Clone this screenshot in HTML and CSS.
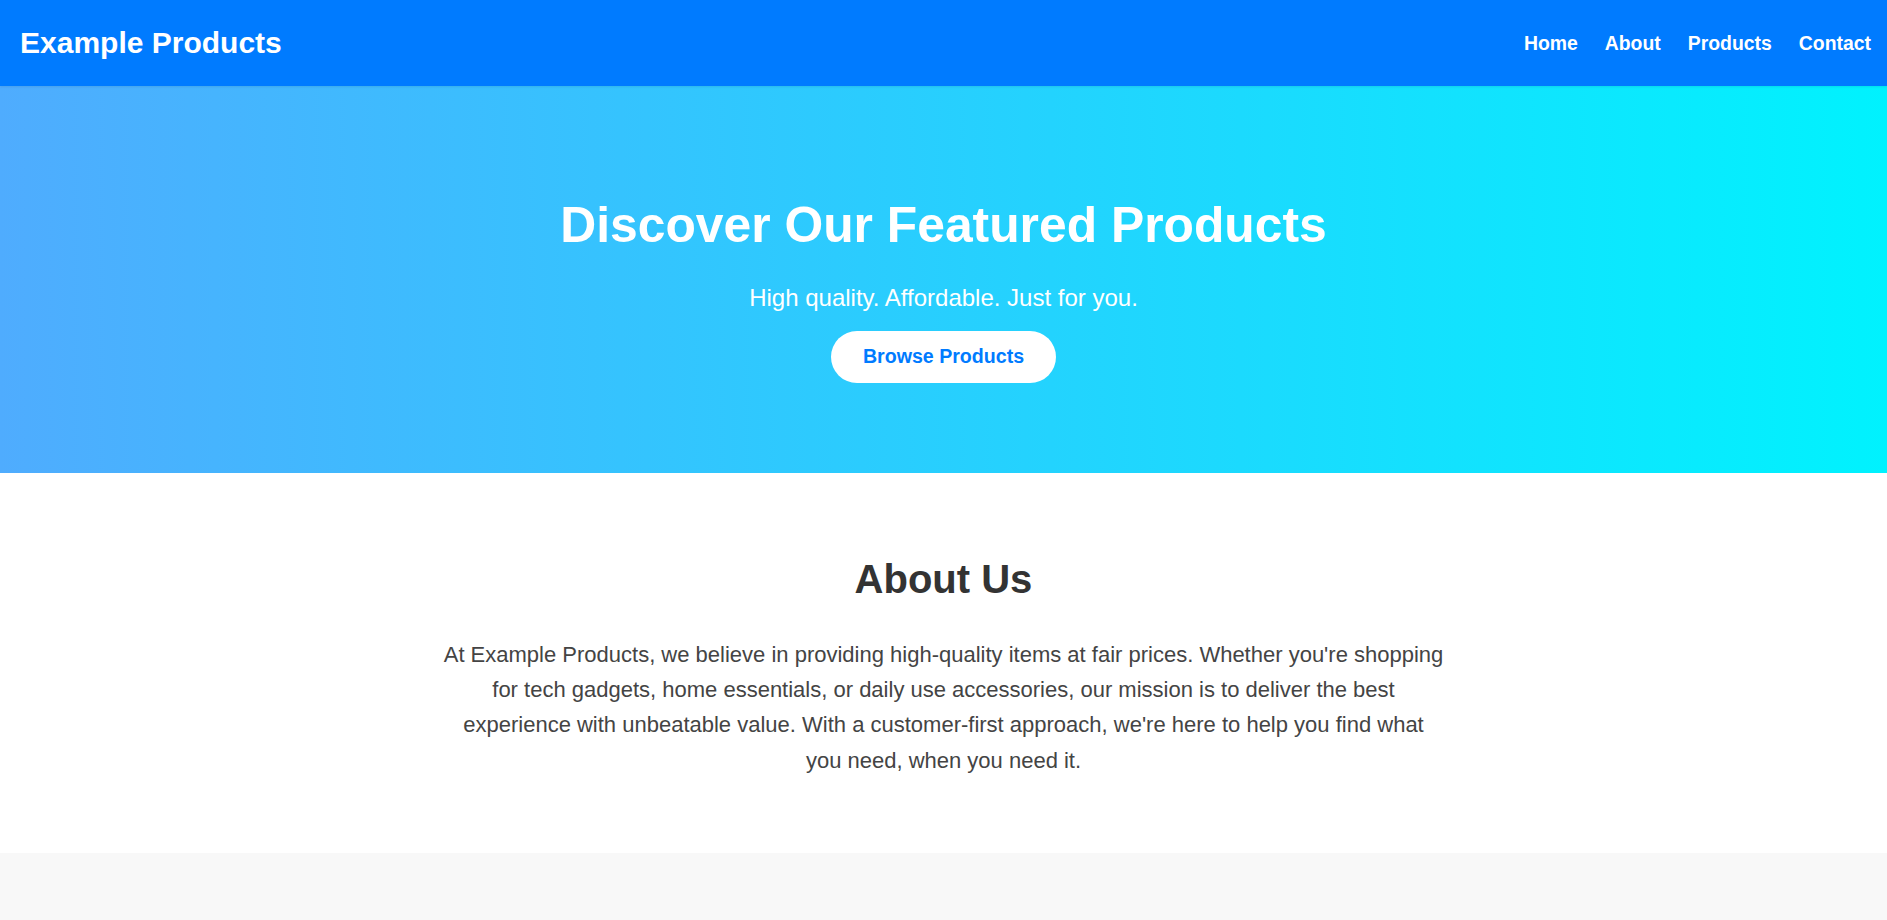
FILE: index.html
```html
<!DOCTYPE html>
<html lang="en">
<head>
<meta charset="utf-8">
<title>Example Products</title>
<link rel="stylesheet" href="styles.css">
</head>
<body>
<header class="site-header">
  <div class="logo">Example Products</div>
  <nav class="nav">
    <a href="#" class="nav-link">Home</a>
    <a href="#" class="nav-link">About</a>
    <a href="#" class="nav-link">Products</a>
    <a href="#" class="nav-link">Contact</a>
  </nav>
</header>
<section class="hero">
  <h1 class="hero-title">Discover Our Featured Products</h1>
  <p class="hero-sub">High quality. Affordable. Just for you.</p>
  <a href="#" class="hero-btn">Browse Products</a>
</section>
<section class="about">
  <h2 class="section-title">About Us</h2>
  <p class="about-text">At Example Products, we believe in providing high-quality items at fair prices. Whether you're shopping for tech gadgets, home essentials, or daily use accessories, our mission is to deliver the best experience with unbeatable value. With a customer-first approach, we're here to help you find what you need, when you need it.</p>
</section>
<section class="products">
  <h2 class="section-title products-title">Our Products</h2>
</section>
</body>
</html>
```

FILE: styles.css
```css
* { box-sizing: border-box; }
html, body { margin: 0; padding: 0; }
body {
  font-family: "Liberation Sans", Arial, sans-serif;
  color: #333;
  background: #fff;
}
.site-header {
  height: 86px;
  background: #007bff;
  display: flex;
  align-items: center;
  justify-content: space-between;
  padding: 0 16px 0 20px;
  box-shadow: 0 1px 2px rgba(0,0,0,0.08);
  position: relative;
  z-index: 1;
}
.logo {
  color: #fff;
  font-weight: bold;
  font-size: 30px;
}
.nav {
  display: flex;
  gap: 27px;
}
.nav-link {
  color: #fff;
  text-decoration: none;
  font-weight: bold;
  font-size: 19.4px;
}
.hero {
  height: 387px;
  background: linear-gradient(to right, #4facfe 0%, #00f2fe 100%);
  display: flex;
  flex-direction: column;
  align-items: center;
  padding: 111px 20px 0;
  color: #fff;
  text-align: center;
}
.hero-title {
  margin: 0 0 30px;
  font-size: 49.8px;
  font-weight: bold;
  line-height: 1.15;
}
.hero-sub {
  margin: 0 0 19px;
  font-size: 24px;
  line-height: 1.15;
}
.hero-btn {
  display: inline-block;
  background: #fff;
  color: #007bff;
  text-decoration: none;
  font-weight: bold;
  font-size: 19.6px;
  line-height: 23px;
  padding: 14.5px 32px;
  border-radius: 30px;
}
.about {
  padding: 83px 20px 75px;
  text-align: center;
}
.section-title {
  margin: 0 0 35px;
  font-size: 40px;
  line-height: 46px;
  font-weight: bold;
  color: #333;
}
.about-text {
  max-width: 1000px;
  margin: 0 auto;
  font-size: 22px;
  line-height: 35.2px;
  color: #444;
}
.products {
  background: #f8f8f8;
  padding: 62px 20px 60px;
  text-align: center;
  min-height: 300px;
}
.products-title {
  color: #fff;
}
```
